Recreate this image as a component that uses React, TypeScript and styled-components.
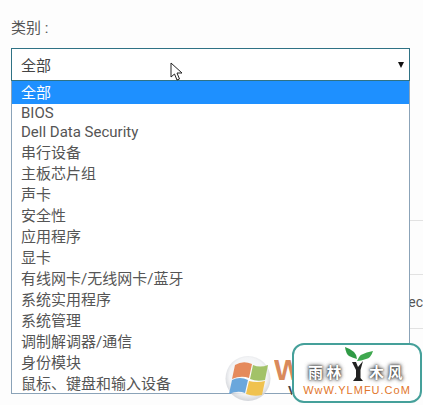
import styled, { createGlobalStyle } from 'styled-components';

const GlobalStyle = createGlobalStyle`
  html, body {
    margin: 0;
    padding: 0;
    background: #fdfdfd;
  }
  body {
    font-family: Roboto, "Noto Sans CJK SC", sans-serif;
  }
`;

const Page = styled.div`
  position: relative;
  width: 423px;
  height: 405px;
  overflow: hidden;
  padding: 19px 0 0 11px;
  box-sizing: border-box;
`;

const Label = styled.div`
  font-size: 15px;
  line-height: 19px;
  color: #555;
`;

const SelectWrap = styled.div`
  position: relative;
  width: 399px;
  margin-top: 10px;
`;

const SelectBox = styled.div`
  height: 33px;
  box-sizing: border-box;
  border: 1px solid #2f7285;
  background: #fff;
  display: flex;
  align-items: center;
  justify-content: space-between;
  padding: 0 5px 0 9px;
  font-size: 15px;
  color: #444;
`;

const Arrow = styled.span`
  width: 0;
  height: 0;
  border-left: 3.5px solid transparent;
  border-right: 3.5px solid transparent;
  border-top: 6px solid #111;
`;

const Dropdown = styled.ul`
  position: absolute;
  top: 33px;
  left: 0;
  right: 0;
  height: 313px;
  box-sizing: border-box;
  margin: 0;
  padding: 0;
  list-style: none;
  background: #fff;
  border: 1px solid #8ba3b8;
  border-top: 0;
  overflow: hidden;
  z-index: 2;
`;

const Option = styled.li<{ $selected?: boolean; $latin?: boolean }>`
  height: ${(p) => (p.$selected ? 23 : p.$latin ? 19 : 21)}px;
  line-height: ${(p) => (p.$selected ? 25 : p.$latin ? 19 : 23)}px;
  padding-left: 9px;
  font-size: 15px;
  white-space: nowrap;
  color: ${(p) => (p.$selected ? '#fff' : '#555')};
  background: ${(p) => (p.$selected ? '#1e90ff' : 'transparent')};
`;

const BehindTable = styled.div`
  margin-top: 139px;
  width: 412px;
`;

const BehindRow = styled.div`
  height: 54px;
  box-sizing: border-box;
  border-top: 1px solid #e2e2e2;
  display: flex;
  align-items: center;
  justify-content: flex-end;
  overflow: hidden;
  font-size: 14px;
  color: #555;
`;

const Cursor = styled.svg`
  position: absolute;
  left: 170px;
  top: 62px;
  z-index: 3;
`;

const Watermark = styled.div`
  position: absolute;
  left: 225px;
  top: 343px;
  display: flex;
  align-items: flex-start;
  z-index: 4;
`;

const WinBadge = styled.svg`
  flex: none;
  margin-top: 12px;
  margin-right: 3px;
`;

const Brand = styled.div`
  flex: none;
  width: 18px;
  margin-top: 12px;
  display: flex;
  flex-direction: column;
  overflow: hidden;
  font-family: "Liberation Sans", sans-serif;
  font-weight: 700;
`;

const BrandLetter = styled.span`
  font-size: 30px;
  line-height: 29px;
  color: #d98a5c;
`;

const BrandSub = styled.span`
  font-size: 13px;
  line-height: 13px;
  padding-left: 14px;
  color: #444;
`;

const Card = styled.div`
  flex: none;
  width: 130px;
  height: 60px;
  box-sizing: border-box;
  padding-top: 2px;
  background: #fff;
  border: 2px solid #45a09a;
  border-radius: 12px;
  display: flex;
  flex-direction: column;
  align-items: center;
`;

const Leaves = styled.svg`
  flex: none;
  margin-left: 3px;
`;

const CardTitle = styled.div`
  height: 21px;
  display: flex;
  align-items: center;
  font-family: "Noto Sans CJK SC", sans-serif;
  font-size: 15px;
  font-weight: 700;
  letter-spacing: 3.5px;
  color: #fff;
  text-shadow: 0 0 2px #333, 0 0 4px #666, 0 0 4px #666;
`;

const Trunk = styled.svg`
  flex: none;
  margin: 0 5px 0 6px;
`;

const CardUrl = styled.div`
  font-family: "Liberation Sans", sans-serif;
  font-size: 11px;
  line-height: 13px;
  margin-top: 2px;
  letter-spacing: 1px;
  color: #e2762c;
`;

const options = [
  'BIOS',
  'Dell Data Security',
  '串行设备',
  '主板芯片组',
  '声卡',
  '安全性',
  '应用程序',
  '显卡',
  '有线网卡/无线网卡/蓝牙',
  '系统实用程序',
  '系统管理',
  '调制解调器/通信',
  '身份模块',
  '鼠标、键盘和输入设备',
];

export default function App() {
  return (
    <>
      <GlobalStyle />
      <Page>
        <Label>类别 :</Label>
        <SelectWrap>
          <SelectBox>
            全部
            <Arrow />
          </SelectBox>
          <Dropdown>
            <Option $selected>全部</Option>
            {options.map((o) => (
              <Option key={o} $latin={/^[A-Z]/.test(o)}>
                {o}
              </Option>
            ))}
          </Dropdown>
        </SelectWrap>
        <BehindTable>
          <BehindRow />
          <BehindRow>ec</BehindRow>
          <BehindRow />
        </BehindTable>
        <Cursor width="14" height="20" viewBox="0 0 14 20">
          <path d="M1 1 L1 15 L4.5 12 L7 18 L9.5 17 L7 11 L12 11 Z" fill="#fff" stroke="#222" strokeWidth="1" />
        </Cursor>
        <Watermark>
          <WinBadge width="46" height="47" viewBox="0 0 46 47">
            <defs>
              <radialGradient id="glass" cx="50%" cy="45%" r="55%">
                <stop offset="0%" stopColor="#ffffff" stopOpacity="0.95" />
                <stop offset="75%" stopColor="#f2f3f5" stopOpacity="0.9" />
                <stop offset="100%" stopColor="#c9ccd2" stopOpacity="0.8" />
              </radialGradient>
            </defs>
            <circle cx="23" cy="23.5" r="22.5" fill="url(#glass)" />
            <path d="M10 10 Q18 5 27 9 L24 23 Q16 20 7 24 Z" fill="#e58a5c" />
            <path d="M28 10 Q35 13 43 10 L40 25 Q32 27 25 24 Z" fill="#a2c268" />
            <path d="M7 25 Q15 21 23 25 L20 38 Q13 35 4 39 Z" fill="#6aa7dc" />
            <path d="M24 26 Q32 28 40 26 L37 40 Q29 42 21 39 Z" fill="#f0c24f" />
          </WinBadge>
          <Brand>
            <BrandLetter>W</BrandLetter>
            <BrandSub>V</BrandSub>
          </Brand>
          <Card>
            <Leaves width="30" height="14" viewBox="0 0 30 14">
              <path d="M13 12 Q13 4 1 0 Q2 7 5 9 Q9 11 13 12 Z" fill="#2f9a45" />
              <path d="M13 14 Q15 6 29 4 Q27 11 22 12 Q17 14 13 14 Z" fill="#3fa84f" />
            </Leaves>
            <CardTitle>
              雨林
              <Trunk width="13" height="21" viewBox="0 0 13 21">
                <path d="M1 1 L5 1 L7 6 L12 0 L9.5 9 L9.5 17 L12 20 L2 20 L5 16 L5 9 Z" fill="#222" />
              </Trunk>
              木风
            </CardTitle>
            <CardUrl>WwW.YLMFU.CoM</CardUrl>
          </Card>
        </Watermark>
      </Page>
    </>
  );
}
